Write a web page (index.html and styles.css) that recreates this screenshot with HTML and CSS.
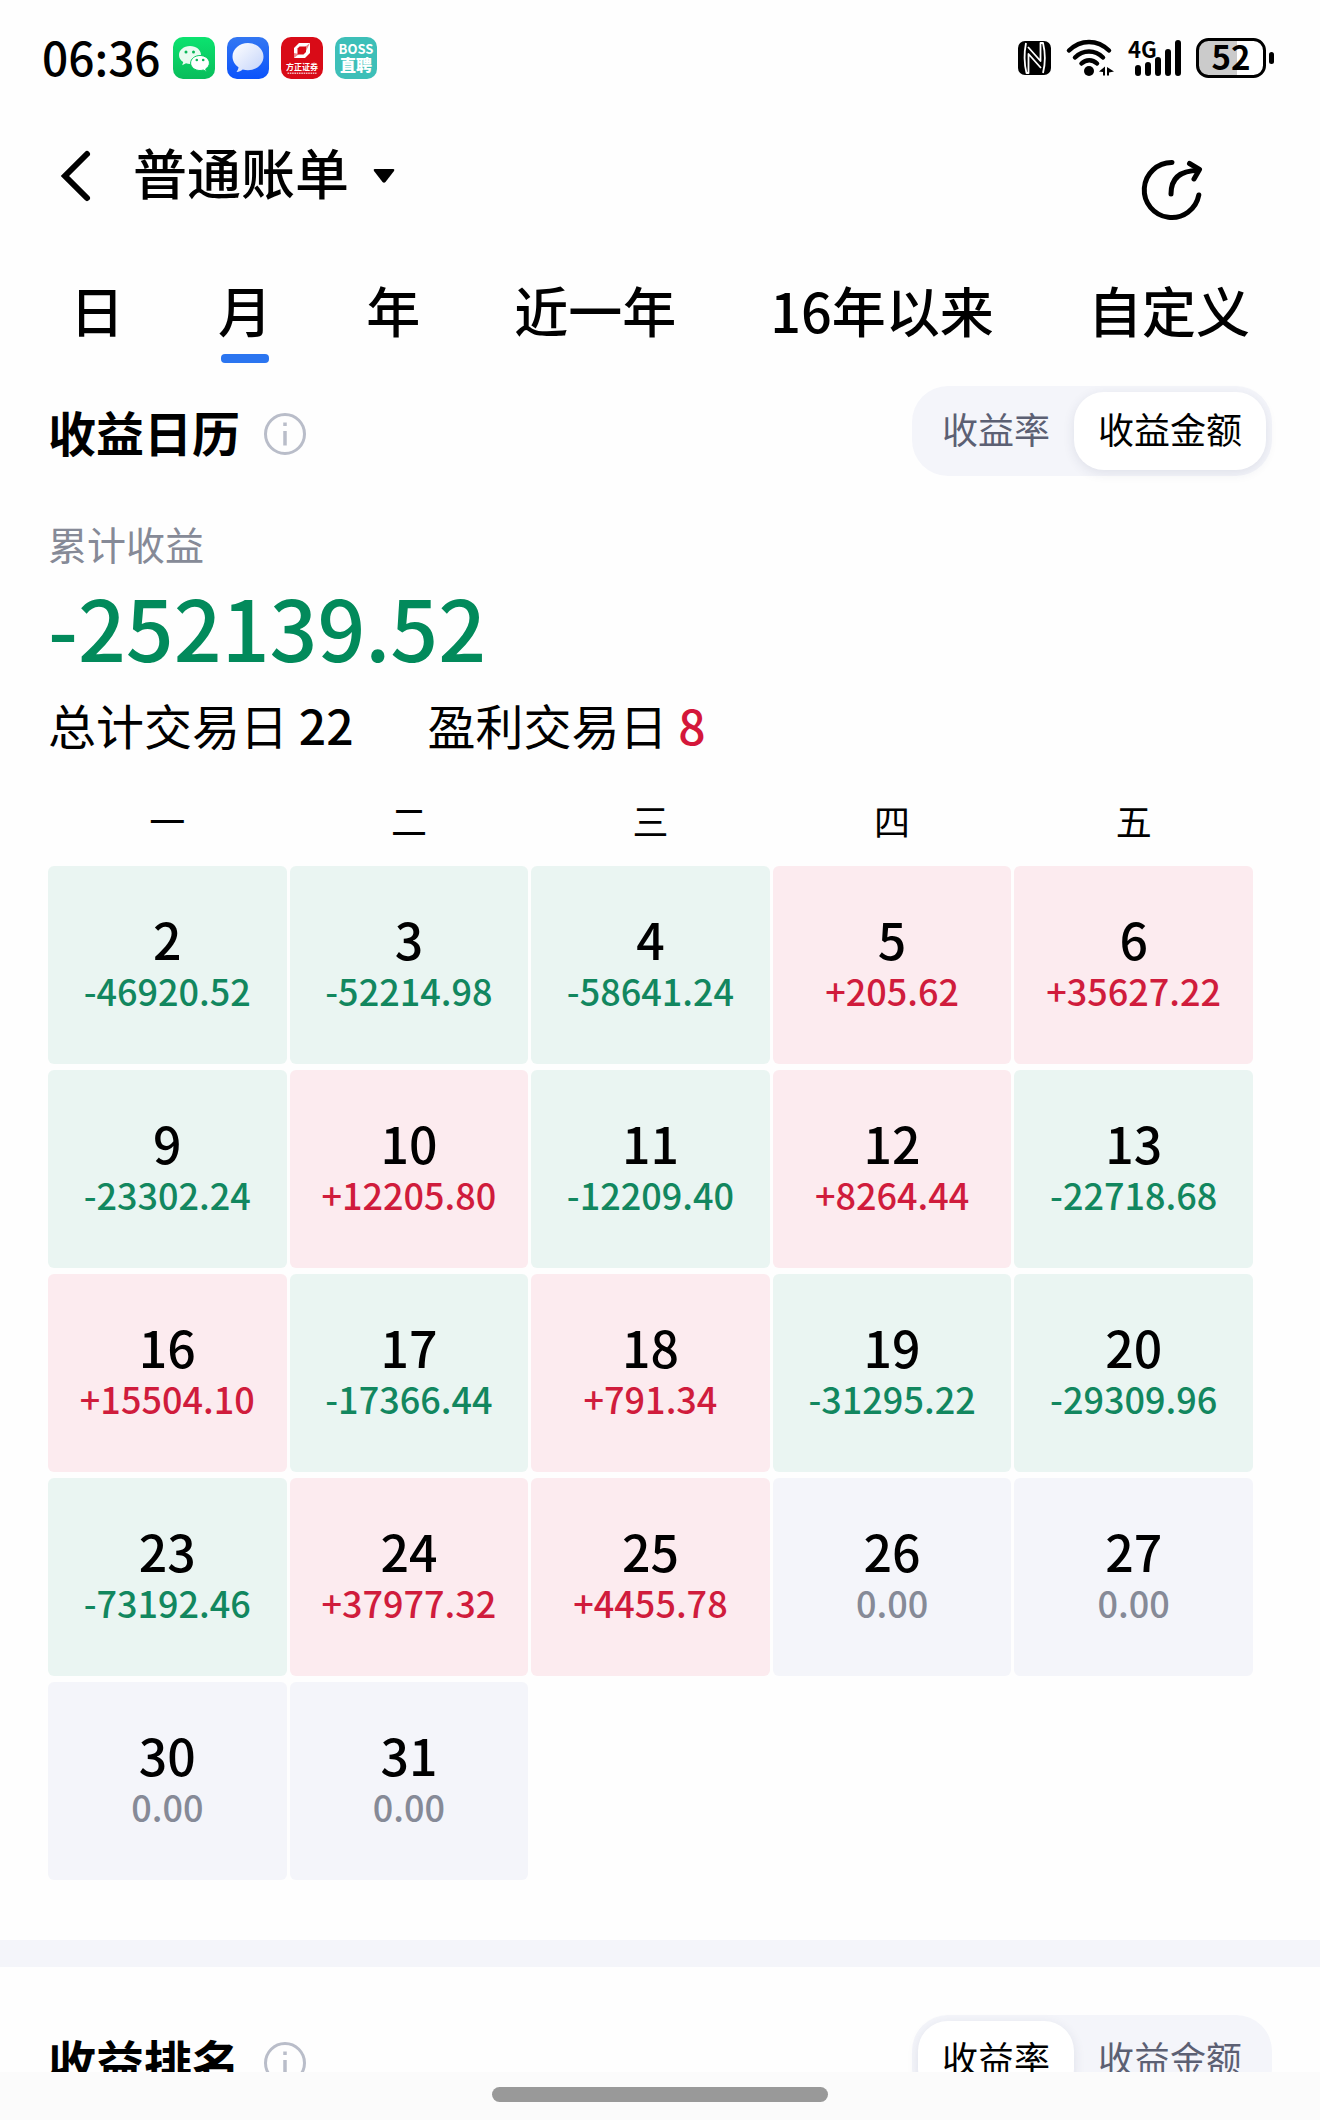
FILE: index.html
```html
<!DOCTYPE html>
<html lang="zh-CN">
<head>
  <meta charset="UTF-8">
  <meta name="viewport" content="width=device-width, initial-scale=1.0">
  <title>普通账单</title>
  <link rel="stylesheet" href="styles.css">
</head>
<body>
  <div class="status-bar">
    <div class="status-left">
      <span class="clock">06:36</span>
      <!-- WeChat -->
      <svg class="app-icon" viewBox="0 0 42 42">
        <defs>
          <linearGradient id="wx" x1="0" y1="0" x2="0" y2="1">
            <stop offset="0" stop-color="#0be36f"/>
            <stop offset="1" stop-color="#09bd5b"/>
          </linearGradient>
          <linearGradient id="msg" x1="0" y1="0" x2="0" y2="1">
            <stop offset="0" stop-color="#3377f2"/>
            <stop offset="1" stop-color="#0b53fb"/>
          </linearGradient>
          <linearGradient id="bubble" x1="0" y1="0" x2="1" y2="1">
            <stop offset="0" stop-color="#ffffff"/>
            <stop offset="1" stop-color="#c3d3fa"/>
          </linearGradient>
        </defs>
        <rect width="42" height="42" rx="10" fill="url(#wx)"/>
        <path d="M17 9c-6.300 0-11 4-11 9 0 3 1.600 5.400 4.200 7l-1 3.200 3.800-1.900c1.300.4 2.600.6 4 .6 6 0 11-4 11-9s-4.700-8.900-11-8.900z" fill="#e9fbf1"/>
        <path d="M27 18.500c-5.200 0-9.400 3.400-9.400 7.500s4.200 7.500 9.400 7.500c1.200 0 2.300-.2 3.300-.5l3.300 1.700-.9-2.800c2.300-1.400 3.700-3.500 3.700-5.900 0-4.100-4.200-7.500-9.400-7.500z" fill="#fff" stroke="#09c860" stroke-width="1"/>
        <circle cx="13" cy="15" r="1.500" fill="#0bb759"/>
        <circle cx="20.500" cy="15" r="1.500" fill="#0bb759"/>
        <circle cx="23.800" cy="23" r="1.300" fill="#0bb759"/>
        <circle cx="30.200" cy="23" r="1.300" fill="#0bb759"/>
      </svg>
      <!-- Messages -->
      <svg class="app-icon" viewBox="0 0 42 42">
        <rect width="42" height="42" rx="10" fill="url(#msg)"/>
        <path d="M21 6C12.500 6 5.500 12 5.500 19.500c0 4.500 2.500 8.300 6 10.800-.2 1.900-.9 3.300-2 4.600 2.500-.2 4.500-1 6.200-2.400 1.700.5 3.500.7 5.300.7 8.500 0 15.500-6 15.500-13.500S29.500 6 21 6z" fill="url(#bubble)"/>
      </svg>
      <!-- Founder Securities -->
      <svg class="app-icon" viewBox="0 0 42 42">
        <rect width="42" height="42" rx="10" fill="#d90b17"/>
        <path d="M18 6h11v10l-5 5H13V11z" fill="#fff"/>
        <path d="M18.500 9.500h6.500v5.500l-2.500 2.500h-6v-6z" fill="#d90b17"/>
        <path d="M13 16l5 1-5 4zM29 6l-4.500 3.500V15z" fill="#d90b17" opacity=".5"/>
        <text class="founder-name" x="21" y="33" text-anchor="middle">方正证券</text>
        <path d="M6.500 36.200h29" stroke="#fff" stroke-width="1.400" stroke-dasharray="1.600 .7" opacity=".7"/>
      </svg>
      <!-- BOSS -->
      <svg class="app-icon" viewBox="0 0 42 42">
        <rect width="42" height="42" rx="10" fill="#3dbfb8"/>
        <text class="boss-latin" x="21" y="17" text-anchor="middle">BOSS</text>
        <text class="boss-name" x="21" y="34" text-anchor="middle">直聘</text>
      </svg>
    </div>
    <div class="status-right">
      <svg class="nfc" viewBox="0 0 34 34">
        <rect width="33" height="34" rx="7" fill="#000"/>
        <path d="M8 2C6 12 6 22 8.500 32H10.500V13L23 27M25 32C27.500 22 27.500 12 25 2H22.500V20L10 6" fill="none" stroke="#fff" stroke-width="1.800" stroke-linejoin="round"/>
      </svg>
      <svg class="wifi" viewBox="0 0 48 38">
        <g fill="none" stroke="#000" stroke-width="4.500" stroke-linecap="round">
          <path d="M3 11.500C14.500 0 31.500 0 43 11.500"/>
          <path d="M9 18.500c8-8 20-8 28 0"/>
          <path d="M15.500 24.500c4.500-4.500 11-4.500 15.500 0"/>
        </g>
        <circle cx="23" cy="32" r="5" fill="#000"/>
        <path d="M33 32.500l6-5v9h-2v-3.500zM41 28l7 4.500-5 1v3h-2z" fill="#000"/>
      </svg>
      <svg class="signal" viewBox="0 0 54 38">
        <text class="network" x="0" y="19">4G</text>
        <g stroke="#000" stroke-width="6" stroke-linecap="round">
          <path d="M10 29v5M20 26v8M30 21v13M40 13v21M50 4v30"/>
        </g>
      </svg>
      <svg class="battery" viewBox="0 0 78 40">
        <rect x="1.500" y="1.500" width="67" height="37" rx="11" fill="#fff"/>
        <path d="M12.500 1.500H41v37H12.500a11 11 0 0 1-11-11v-15a11 11 0 0 1 11-11z" fill="#cbcbcb"/>
        <rect x="1.500" y="1.500" width="67" height="37" rx="11" fill="none" stroke="#000" stroke-width="3"/>
        <rect x="73" y="14" width="5" height="12" rx="2.500" fill="#000"/>
        <text class="battery-level" x="35" y="32" text-anchor="middle">52</text>
      </svg>
    </div>
  </div>

  <header class="page-header">
    <button class="icon-button" type="button" aria-label="返回">
      <svg class="back" viewBox="0 0 30 52">
        <path d="M26 4L4 26l22 22" fill="none" stroke="#000" stroke-width="6" stroke-linecap="round"/>
      </svg>
    </button>
    <label class="account-picker">
      <select aria-label="账单类型">
        <option>普通账单</option>
      </select>
      <svg class="caret" viewBox="0 0 22 14">
        <path d="M1.500 0h19q1.500.5.500 2L12.500 13q-1.500 1.500-3 0L1 2Q0 .5 1.500 0z" fill="#000"/>
      </svg>
    </label>
    <button class="icon-button share-button" type="button" aria-label="分享">
      <svg class="share" viewBox="0 0 62 62">
        <g fill="none" stroke="#000" stroke-width="5" stroke-linecap="round" stroke-linejoin="round">
          <path d="M31 3.500A27.500 27.500 0 1 0 57.800 36"/>
          <path d="M30 35C30 20 38 11.500 57 11.500"/>
          <path d="M48.500 4.500L58.500 10.500 53 20"/>
        </g>
      </svg>
    </button>
  </header>

  <nav class="tabs">
    <button class="tab" type="button">日</button>
    <button class="tab active" type="button">月</button>
    <button class="tab" type="button">年</button>
    <button class="tab" type="button">近一年</button>
    <button class="tab" type="button">16年以来</button>
    <button class="tab" type="button">自定义</button>
  </nav>

  <section class="calendar-section">
    <div class="section-head">
      <h2>收益日历</h2>
      <svg class="info" viewBox="0 0 42 42">
        <circle cx="21" cy="21" r="19.500" fill="none" stroke="#b9bdc9" stroke-width="3"/>
        <path d="M21 18v14.500M21 9.500v3.500" stroke="#b9bdc9" stroke-width="3.500"/>
      </svg>
      <div class="segment">
        <button type="button">收益率</button>
        <button class="active" type="button">收益金额</button>
      </div>
    </div>

    <p class="total-label">累计收益</p>
    <p class="total">-252139.52</p>
    <div class="stats">
      <p>总计交易日 <strong>22</strong></p>
      <p>盈利交易日 <strong class="win">8</strong></p>
    </div>

    <table class="calendar">
      <thead>
        <tr>
          <th scope="col">一</th>
          <th scope="col">二</th>
          <th scope="col">三</th>
          <th scope="col">四</th>
          <th scope="col">五</th>
        </tr>
      </thead>
      <tbody>
        <tr>
          <td class="down"><b>2</b><span>-46920.52</span></td>
          <td class="down"><b>3</b><span>-52214.98</span></td>
          <td class="down"><b>4</b><span>-58641.24</span></td>
          <td class="up"><b>5</b><span>+205.62</span></td>
          <td class="up"><b>6</b><span>+35627.22</span></td>
        </tr>
        <tr>
          <td class="down"><b>9</b><span>-23302.24</span></td>
          <td class="up"><b>10</b><span>+12205.80</span></td>
          <td class="down"><b>11</b><span>-12209.40</span></td>
          <td class="up"><b>12</b><span>+8264.44</span></td>
          <td class="down"><b>13</b><span>-22718.68</span></td>
        </tr>
        <tr>
          <td class="up"><b>16</b><span>+15504.10</span></td>
          <td class="down"><b>17</b><span>-17366.44</span></td>
          <td class="up"><b>18</b><span>+791.34</span></td>
          <td class="down"><b>19</b><span>-31295.22</span></td>
          <td class="down"><b>20</b><span>-29309.96</span></td>
        </tr>
        <tr>
          <td class="down"><b>23</b><span>-73192.46</span></td>
          <td class="up"><b>24</b><span>+37977.32</span></td>
          <td class="up"><b>25</b><span>+4455.78</span></td>
          <td class="flat"><b>26</b><span>0.00</span></td>
          <td class="flat"><b>27</b><span>0.00</span></td>
        </tr>
        <tr>
          <td class="flat"><b>30</b><span>0.00</span></td>
          <td class="flat"><b>31</b><span>0.00</span></td>
        </tr>
      </tbody>
    </table>
  </section>

  <section class="ranking-section">
    <div class="section-head">
      <h2>收益排名</h2>
      <svg class="info" viewBox="0 0 42 42">
        <circle cx="21" cy="21" r="19.500" fill="none" stroke="#b9bdc9" stroke-width="3"/>
        <path d="M21 18v14.500M21 9.500v3.500" stroke="#b9bdc9" stroke-width="3.500"/>
      </svg>
      <div class="segment">
        <button class="active" type="button">收益率</button>
        <button type="button">收益金额</button>
      </div>
    </div>
  </section>

  <div class="gesture-bar"><span class="gesture-pill"></span></div>
</body>
</html>
```
FILE: styles.css
```css
* {
  margin: 0;
  padding: 0;
  box-sizing: border-box;
}

body {
  height: 100vh;
  overflow: hidden;
  background: #fefefe;
  color: #000;
  font-family: "Noto Sans CJK SC", sans-serif;
}

button,
select {
  border: none;
  background: none;
  color: inherit;
  font-family: inherit;
  cursor: pointer;
}

svg {
  display: block;
  flex: none;
  overflow: visible;
}

/* Status bar */
.status-bar {
  display: flex;
  justify-content: space-between;
  align-items: center;
  height: 116px;
  padding: 0 46px 0 42px;
}

.status-left {
  display: flex;
  align-items: center;
  gap: 12px;
}

.status-right {
  display: flex;
  align-items: center;
  gap: 14px;
}

.clock {
  font-size: 46px;
  font-weight: 500;
  line-height: 48px;
  padding-bottom: 4px;
}

.app-icon {
  width: 42px;
  height: 42px;
}

.founder-name {
  font-size: 8px;
  font-weight: 700;
  fill: #fff;
}

.boss-latin {
  font-size: 13px;
  font-weight: 700;
  fill: #fff;
}

.boss-name {
  font-size: 16px;
  font-weight: 900;
  fill: #fff;
}

.nfc {
  width: 34px;
  height: 34px;
}

.wifi {
  width: 48px;
  height: 38px;
}

.signal {
  width: 54px;
  height: 38px;
}

.battery {
  width: 78px;
  height: 40px;
}

.network {
  font-size: 22px;
  font-weight: 700;
}

.battery-level {
  font-size: 33px;
  font-weight: 700;
}

/* Header */
.page-header {
  display: flex;
  align-items: center;
  height: 120px;
  padding: 0 117px 0 61px;
}

.back {
  width: 30px;
  height: 52px;
}

.account-picker {
  display: flex;
  align-items: center;
  gap: 24px;
  margin-left: 42px;
}

.account-picker select {
  appearance: none;
  font-size: 54px;
  font-weight: 500;
  line-height: 80px;
  padding-bottom: 8px;
}

.caret {
  width: 22px;
  height: 14px;
}

.share-button {
  margin-left: auto;
  padding-top: 28px;
}

.share {
  width: 62px;
  height: 62px;
}

/* Period tabs */
.tabs {
  display: flex;
  justify-content: space-between;
  padding: 38px 70px 0 70px;
}

.tab {
  display: flex;
  flex-direction: column;
  align-items: center;
  gap: 8px;
  font-size: 54px;
  font-weight: 500;
  line-height: 72px;
}

.tab::after {
  content: "";
  width: 48px;
  height: 9px;
  border-radius: 4px;
}

.tab.active::after {
  background: #2b75f0;
}

/* Sections */
.calendar-section {
  padding: 23px 48px 60px;
}

.ranking-section {
  padding: 48px 48px;
  border-top: 27px solid #f4f5fa;
}

.section-head {
  display: flex;
  align-items: center;
}

h2 {
  font-size: 48px;
  font-weight: 700;
  line-height: 72px;
}

.info {
  width: 42px;
  height: 42px;
  margin: 6px 0 0 24px;
}

.segment {
  display: flex;
  margin-left: auto;
  padding: 6px;
  border-radius: 36px;
  background: #f4f5fa;
}

.segment button {
  height: 78px;
  padding: 0 24px 6px;
  border-radius: 30px;
  color: #5c6073;
  font-size: 36px;
}

.segment .active {
  background: #fff;
  color: #000;
  box-shadow: 0 3px 12px rgba(40, 50, 90, 0.1);
}

/* Totals */
.total-label {
  margin-top: 41px;
  color: #868a97;
  font-size: 39px;
  line-height: 52px;
}

.total {
  color: #028a5b;
  font-size: 84px;
  font-weight: 500;
  line-height: 114px;
}

.stats {
  display: flex;
  gap: 74px;
  margin-top: 6px;
  font-size: 48px;
  line-height: 70px;
}

.stats strong {
  font-weight: 500;
}

.stats .win {
  color: #d4173a;
}

/* Calendar */
.calendar {
  width: calc(100% - 13px);
  margin: 15px 0 -6px -3px;
  table-layout: fixed;
  border-spacing: 3px 6px;
}

.calendar th {
  height: 80px;
  font-size: 36px;
  font-weight: 400;
  line-height: 52px;
}

.calendar td {
  height: 198px;
  border-radius: 6px;
  text-align: center;
  vertical-align: middle;
}

.calendar b {
  display: block;
  font-size: 50px;
  font-weight: 500;
  line-height: 52px;
}

.calendar span {
  display: block;
  font-size: 36px;
  font-weight: 500;
  line-height: 52px;
  padding-bottom: 2px;
}

.down {
  background: #eaf5f2;
}

.down span {
  color: #12875f;
}

.up {
  background: #fcebef;
}

.up span {
  color: #d01c3c;
}

.flat {
  background: #f4f5fa;
}

.flat span {
  color: #868a97;
}

/* System gesture bar, stays above the page */
.gesture-bar {
  position: fixed;
  left: 0;
  right: 0;
  bottom: 0;
  display: flex;
  justify-content: center;
  height: 48px;
  padding-top: 15px;
  background: #fbfbfb;
}

.gesture-pill {
  width: 336px;
  height: 15px;
  border-radius: 8px;
  background: #999;
}
```
